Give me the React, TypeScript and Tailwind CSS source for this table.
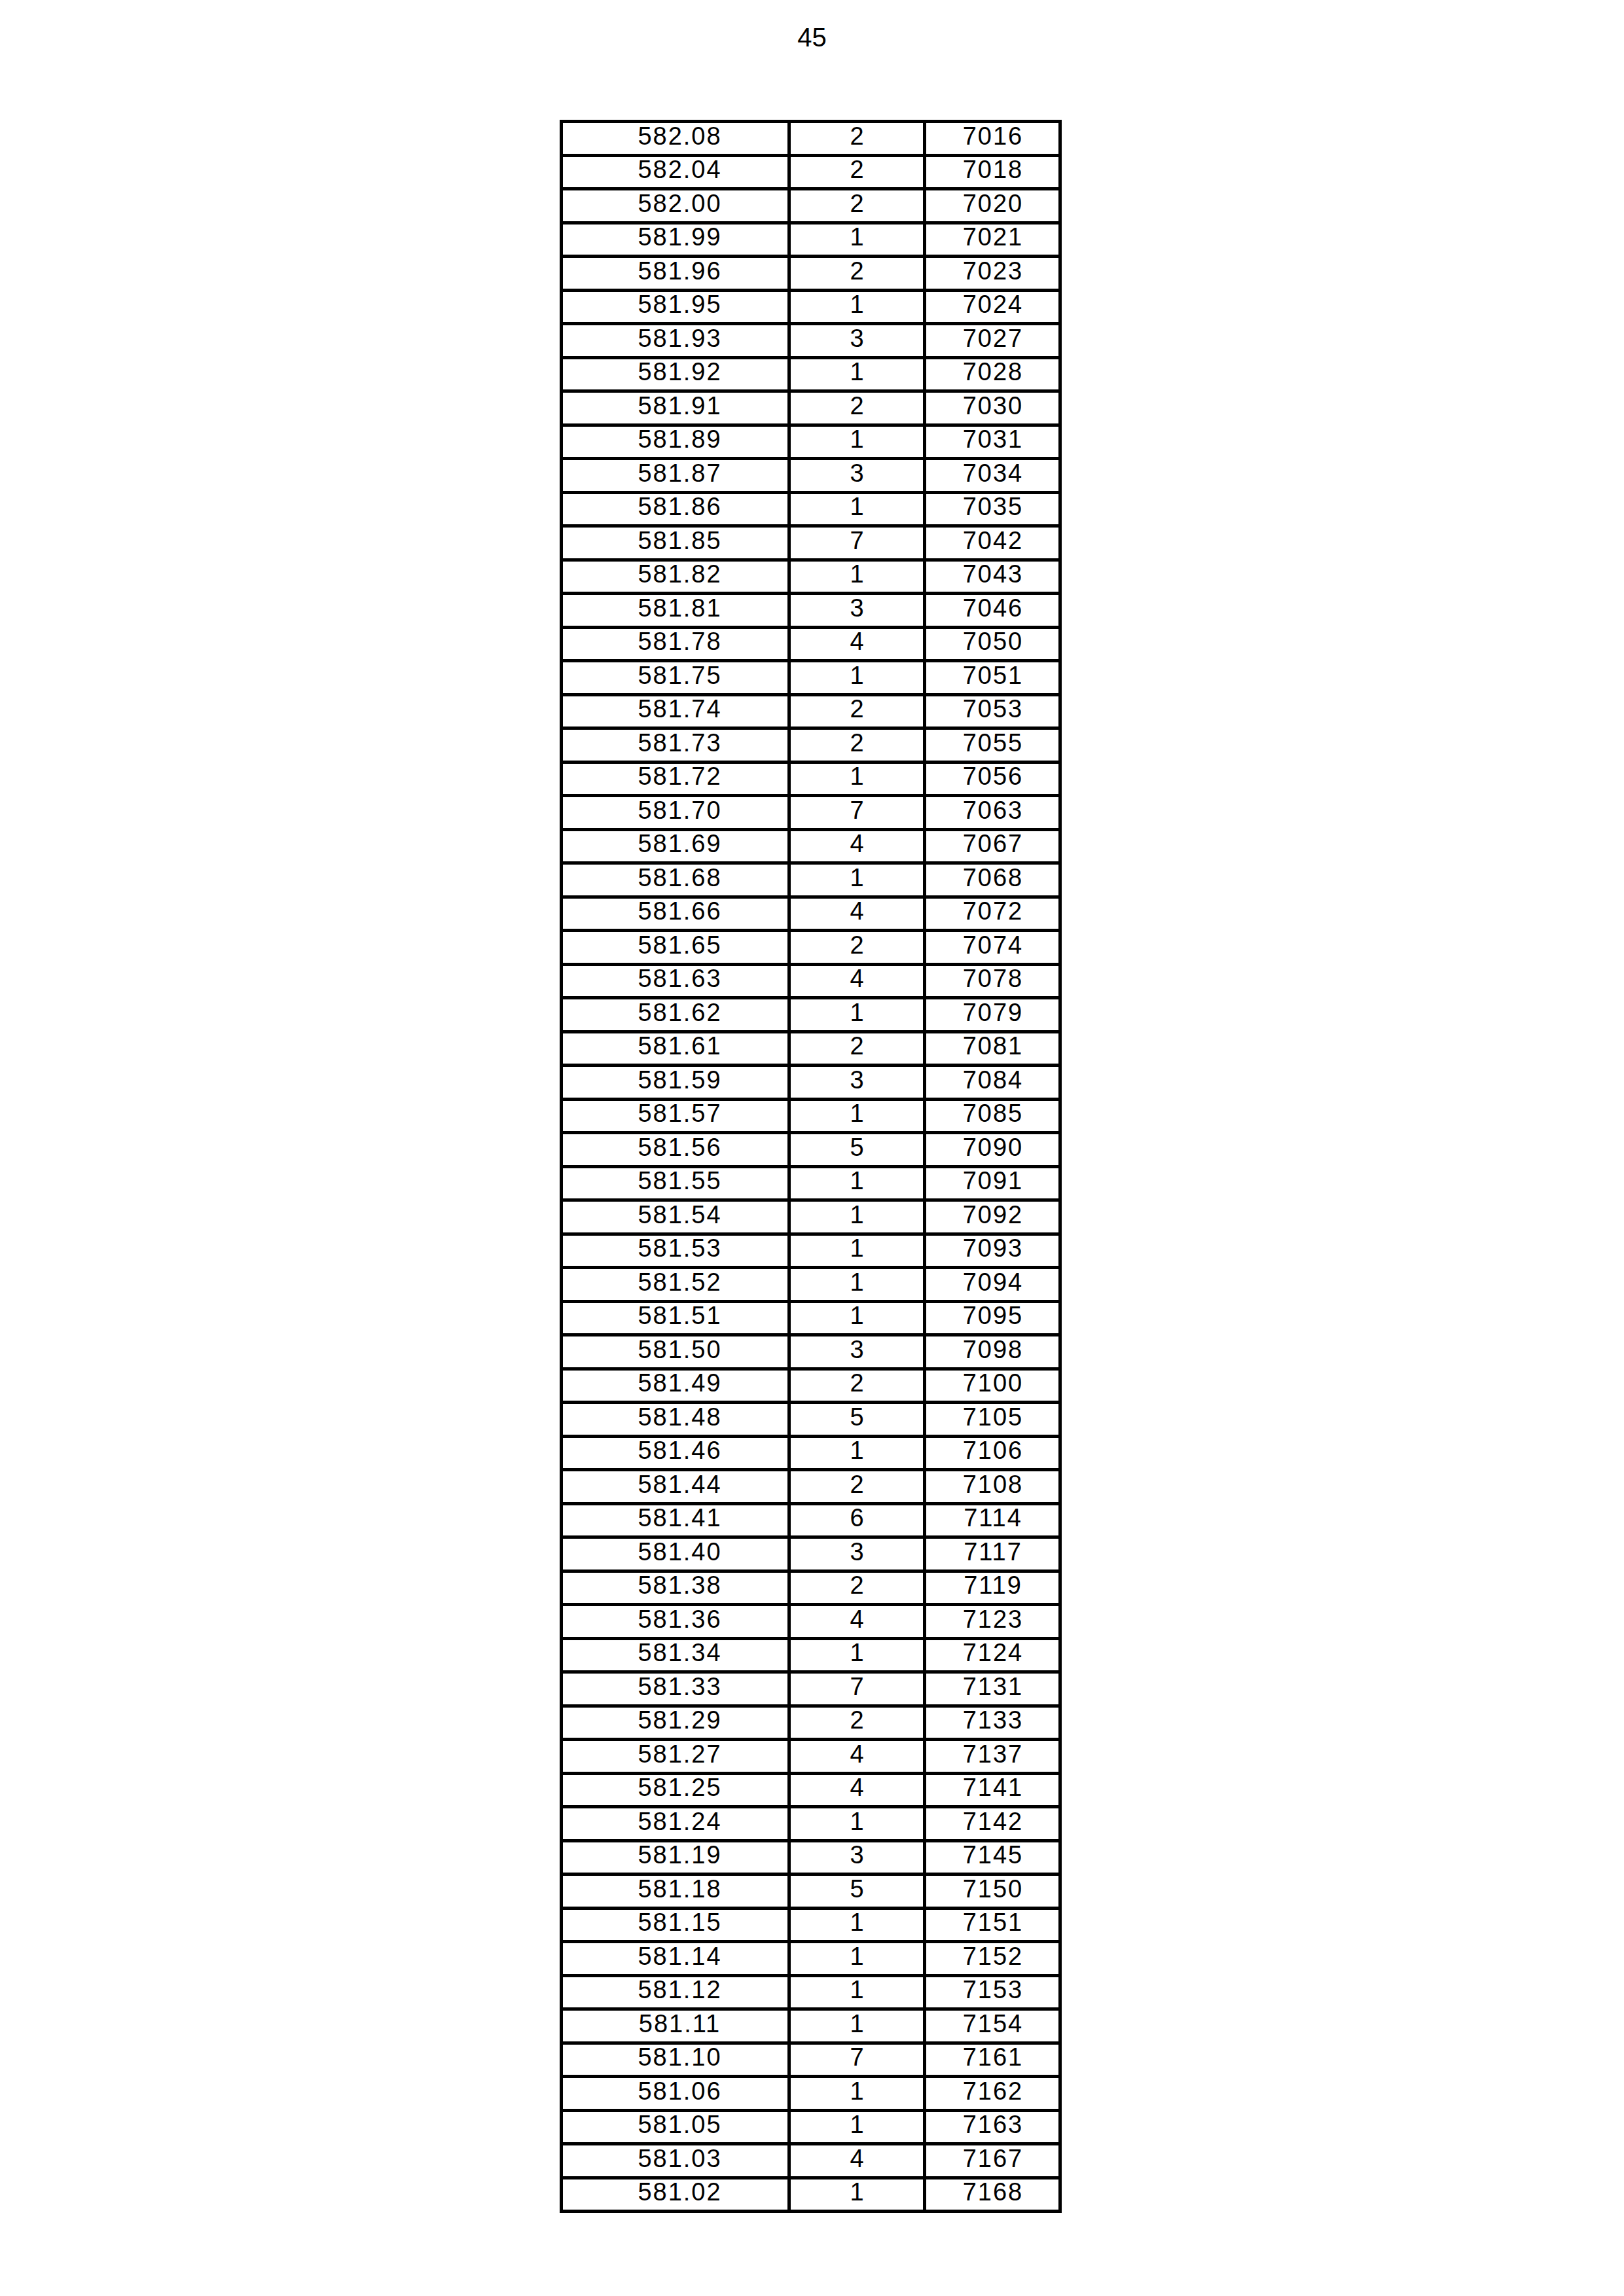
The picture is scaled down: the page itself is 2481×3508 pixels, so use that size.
const ROWS: [string, number, number][] = [
    ["582.08", 2, 7016],
    ["582.04", 2, 7018],
    ["582.00", 2, 7020],
    ["581.99", 1, 7021],
    ["581.96", 2, 7023],
    ["581.95", 1, 7024],
    ["581.93", 3, 7027],
    ["581.92", 1, 7028],
    ["581.91", 2, 7030],
    ["581.89", 1, 7031],
    ["581.87", 3, 7034],
    ["581.86", 1, 7035],
    ["581.85", 7, 7042],
    ["581.82", 1, 7043],
    ["581.81", 3, 7046],
    ["581.78", 4, 7050],
    ["581.75", 1, 7051],
    ["581.74", 2, 7053],
    ["581.73", 2, 7055],
    ["581.72", 1, 7056],
    ["581.70", 7, 7063],
    ["581.69", 4, 7067],
    ["581.68", 1, 7068],
    ["581.66", 4, 7072],
    ["581.65", 2, 7074],
    ["581.63", 4, 7078],
    ["581.62", 1, 7079],
    ["581.61", 2, 7081],
    ["581.59", 3, 7084],
    ["581.57", 1, 7085],
    ["581.56", 5, 7090],
    ["581.55", 1, 7091],
    ["581.54", 1, 7092],
    ["581.53", 1, 7093],
    ["581.52", 1, 7094],
    ["581.51", 1, 7095],
    ["581.50", 3, 7098],
    ["581.49", 2, 7100],
    ["581.48", 5, 7105],
    ["581.46", 1, 7106],
    ["581.44", 2, 7108],
    ["581.41", 6, 7114],
    ["581.40", 3, 7117],
    ["581.38", 2, 7119],
    ["581.36", 4, 7123],
    ["581.34", 1, 7124],
    ["581.33", 7, 7131],
    ["581.29", 2, 7133],
    ["581.27", 4, 7137],
    ["581.25", 4, 7141],
    ["581.24", 1, 7142],
    ["581.19", 3, 7145],
    ["581.18", 5, 7150],
    ["581.15", 1, 7151],
    ["581.14", 1, 7152],
    ["581.12", 1, 7153],
    ["581.11", 1, 7154],
    ["581.10", 7, 7161],
    ["581.06", 1, 7162],
    ["581.05", 1, 7163],
    ["581.03", 4, 7167],
    ["581.02", 1, 7168],
]

const cell = "flex h-[46.5px] items-center justify-center bg-white pb-[6px] text-[38px] tracking-[2px]"

export default function App() {
    return (
        <div className="min-h-[3508px] w-[2481px] bg-white text-black font-['Liberation_Sans',Arial,sans-serif]">
            {/* page number */}
            <div className="pt-[37px] text-center text-[40px] leading-none">45</div>

            <div className="ml-[855px] mt-[106px] grid w-fit grid-cols-[343px_202px_202px] gap-[5px] border-[5px] border-black bg-black">
                {ROWS.map(([level, count, total]) => (
                    <div key={level} className="contents">
                        <div className={`${cell} pl-[14px]`}>{level}</div>
                        <div className={`${cell} pl-[2px]`}>{count}</div>
                        <div className={`${cell} pl-[2px]`}>{total}</div>
                    </div>
                ))}
            </div>
        </div>
    )
}
